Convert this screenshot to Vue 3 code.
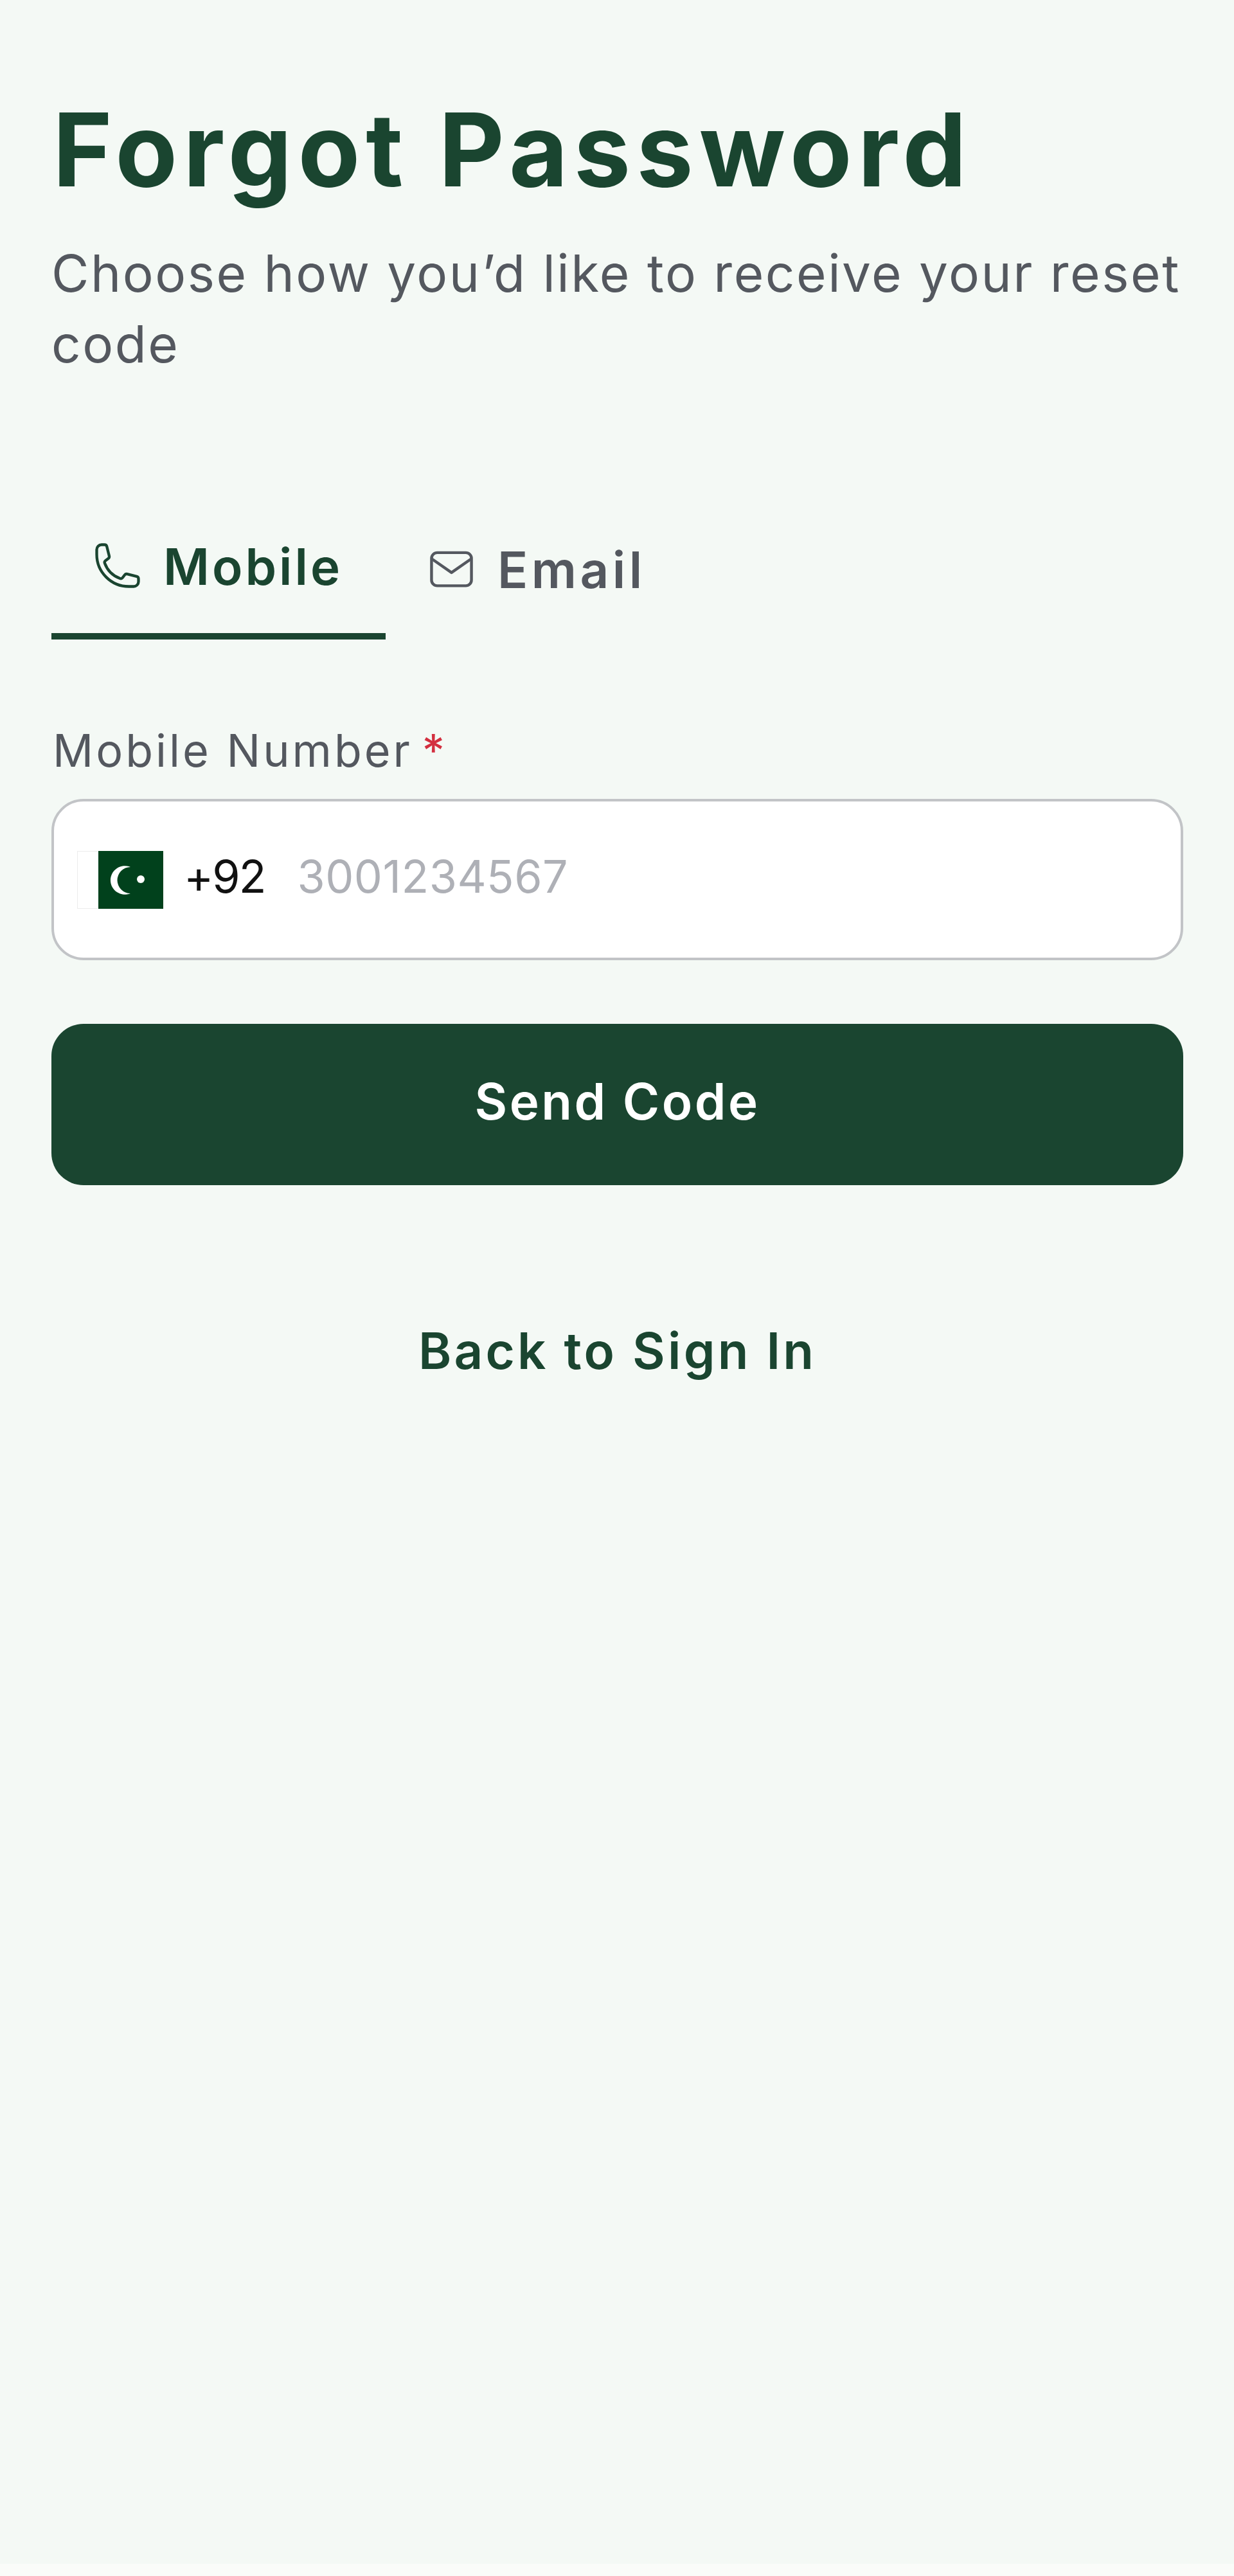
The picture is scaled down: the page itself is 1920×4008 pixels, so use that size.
<script setup>
import { ref } from 'vue'
const phone = ref('')
</script>

<template>
  <main class="page">
    <h1 class="title">Forgot Password</h1>
    <p class="subtitle">Choose how you’d like to receive your reset code</p>

    <div class="tabs">
      <button class="tab tab-active" type="button">
        <svg class="icon-phone" viewBox="0 0 24 24" fill="none" stroke="currentColor" stroke-width="1.3" stroke-linecap="round" stroke-linejoin="round">
          <path d="M2.25 6.75c0 8.284 6.716 15 15 15h2.25a2.25 2.25 0 0 0 2.25-2.25v-1.372c0-.516-.351-.966-.852-1.091l-4.423-1.106c-.44-.11-.902.055-1.173.417l-.97 1.293c-.282.376-.769.542-1.21.38a12.035 12.035 0 0 1-7.143-7.143c-.162-.441.004-.928.38-1.21l1.293-.97c.363-.271.527-.734.417-1.173L6.963 3.102a1.125 1.125 0 0 0-1.091-.852H4.5A2.25 2.25 0 0 0 2.25 4.5v2.25Z" />
        </svg>
        <span>Mobile</span>
      </button>
      <button class="tab tab-idle" type="button">
        <svg class="icon-mail" viewBox="0 0 24 24" fill="none" stroke="currentColor" stroke-width="1.5" stroke-linecap="round" stroke-linejoin="round">
          <rect x="1.5" y="3" width="21" height="17.4" rx="3" />
          <path d="M2 6.5l10 7 10-7" />
        </svg>
        <span>Email</span>
      </button>
    </div>

    <label class="label" for="phone"><span class="label-text">Mobile Number</span> <span class="req">*</span></label>
    <div class="field">
      <svg class="flag" viewBox="0 0 134 90">
        <rect width="33" height="90" fill="#ffffff" />
        <path d="M0 .5H33M0 89.5H33M.5 0V90" stroke="#ececec" stroke-width="1" fill="none" />
        <rect x="33" width="101" height="90" fill="#01411c" />
        <path d="M83 25A22.3 22.3 0 1 0 83 66A20.5 20.5 0 0 1 83 25Z" fill="#ffffff" />
        <circle cx="99" cy="44" r="6" fill="#ffffff" />
      </svg>
      <span class="code">+92</span>
      <input id="phone" v-model="phone" class="input" type="tel" placeholder="3001234567" />
    </div>

    <button class="send" type="button">Send Code</button>
    <a class="back" href="#">Back to Sign In</a>
  </main>
</template>

<style>
body {
  background: #fafcf9;
}
</style>

<style scoped>
.page {
  box-sizing: border-box;
  min-height: 3989px;
  padding: 138px 79px 0 80px;
  background: #f4f9f5;
  font-family: Inter, "Liberation Sans", sans-serif;
  display: flex;
  flex-direction: column;
}
.title {
  margin: 0 0 0 2px;
  font-size: 158px;
  line-height: 190px;
  font-weight: 700;
  color: #1a4530;
  letter-spacing: 9px;
}
.subtitle {
  margin: 42px 0 0;
  font-size: 80px;
  line-height: 110px;
  font-weight: 400;
  letter-spacing: 2.5px;
  color: #54585f;
}
.tabs {
  display: flex;
  margin-top: 221px;
}
.tab {
  border: 0;
  background: none;
  padding: 0;
  font-family: inherit;
  font-size: 78px;
  line-height: 94px;
  font-weight: 600;
  display: flex;
  align-items: flex-start;
}
.tab-active {
  box-sizing: border-box;
  width: 520px;
  height: 184px;
  padding: 24px 0 0 63px;
  gap: 31px;
  letter-spacing: 4px;
  color: #1a4530;
  border-bottom: 10px solid #1a4530;
}
.tab-idle {
  height: 184px;
  margin-left: 67px;
  padding-top: 29px;
  gap: 36px;
  letter-spacing: 5.5px;
  color: #54585f;
}
.icon-phone {
  width: 80px;
  height: 80px;
  margin-top: 5px;
  flex: none;
}
.icon-mail {
  width: 71px;
  height: 71px;
  margin-top: 11px;
  flex: none;
}
.label {
  margin-top: 131px;
  padding-left: 2px;
  font-size: 70px;
  line-height: 84px;
  font-weight: 400;
  letter-spacing: 4px;
  word-spacing: -9px;
  color: #54585f;
}
.label-text {
  word-spacing: 0;
}
.req {
  color: #d32f3f;
}
.field {
  box-sizing: border-box;
  height: 251px;
  margin-top: 33px;
  display: flex;
  align-items: center;
  padding-left: 36px;
  background: #ffffff;
  border: 4px solid #c2c4c7;
  border-radius: 50px;
}
.flag {
  width: 134px;
  height: 90px;
  flex: none;
}
.code {
  margin: 0 0 10px 32px;
  font-size: 70px;
  letter-spacing: -2px;
  color: #111111;
}
.input {
  flex: 1;
  min-width: 0;
  margin: 0 0 10px 50px;
  border: 0;
  outline: 0;
  padding: 0;
  background: transparent;
  font-family: inherit;
  font-size: 70px;
  letter-spacing: 0.5px;
  color: #111111;
}
.input::placeholder {
  color: #aeb0b6;
  opacity: 1;
}
.send {
  height: 251px;
  margin-top: 99px;
  padding: 0 0 10px;
  border: 0;
  border-radius: 50px;
  background: #1a4530;
  color: #ffffff;
  font-family: inherit;
  font-size: 78px;
  font-weight: 600;
  letter-spacing: 3.5px;
}
.back {
  margin-top: 211px;
  text-align: center;
  font-size: 78px;
  line-height: 94px;
  font-weight: 600;
  letter-spacing: 4.2px;
  color: #1a4530;
  text-decoration: none;
}
</style>
